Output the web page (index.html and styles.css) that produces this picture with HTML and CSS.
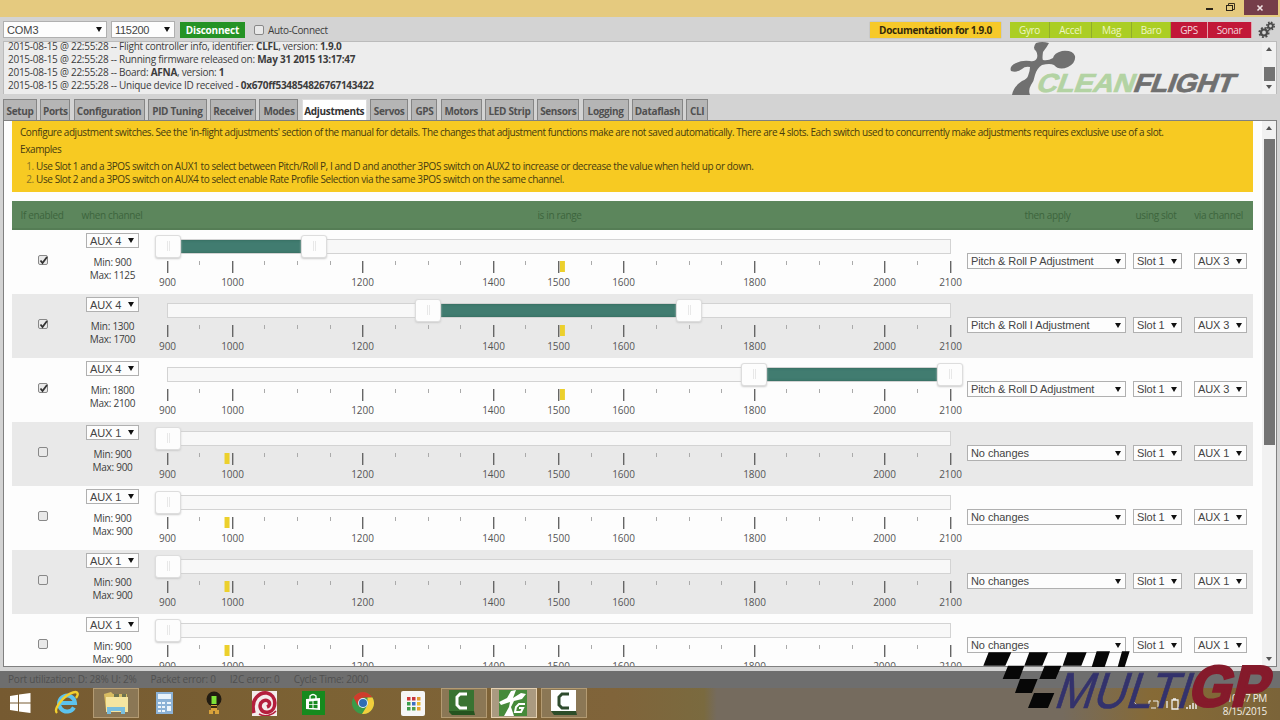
FILE: index.html
```html
<!DOCTYPE html>
<html lang="en">
<head>
    <meta charset="UTF-8">
    <title>Cleanflight Configurator</title>
    <link rel="stylesheet" href="styles.css">
</head>
<body>
    <div class="titlebar">
        <svg class="window-buttons" width="80" height="17" viewBox="0 0 80 17">
            <rect x="44" y="0" width="34" height="15" fill="#753d49"/>
            <rect x="6" y="8" width="7" height="2" fill="#2b2417"/>
            <path d="M28.500 5V3.500H34.500V9.500H33" fill="none" stroke="#3b321f"/>
            <rect x="26.500" y="5.500" width="6" height="5" fill="none" stroke="#2b2417"/>
            <path d="M57.500 5.500l5 5M62.500 5.500l-5 5" stroke="#f0e2e2" stroke-width="1.600"/>
        </svg>
    </div>

    <div class="port-bar">
        <span class="select port">COM3</span>
        <span class="select baud">115200</span>
        <a class="disconnect">Disconnect</a>
        <label class="auto-connect"><i class="check"></i>Auto-Connect</label>
        <a class="docs">Documentation for 1.9.0</a>
        <div class="sensors">
            <span class="on">Gyro</span>
            <span class="on">Accel</span>
            <span class="on">Mag</span>
            <span class="on">Baro</span>
            <span class="off">GPS</span>
            <span class="off">Sonar</span>
        </div>
        <svg class="gears" width="18" height="18" viewBox="0 0 18 18" fill="none" stroke="#4a4a4a">
            <circle cx="6" cy="11.500" r="3" stroke-width="2.200"/>
            <circle cx="6" cy="11.500" r="4.700" stroke-width="1.800" stroke-dasharray="1.900 1.790"/>
            <circle cx="12.500" cy="5" r="2.300" stroke-width="1.800"/>
            <circle cx="12.500" cy="5" r="3.700" stroke-width="1.600" stroke-dasharray="1.600 1.300"/>
        </svg>
    </div>

    <div class="log">
        <div class="log-lines">
            <p>2015-08-15 @ 22:55:28 -- Flight controller info, identifier: <strong>CLFL</strong>, version: <strong>1.9.0</strong></p>
            <p>2015-08-15 @ 22:55:28 -- Running firmware released on: <strong>May 31 2015 13:17:47</strong></p>
            <p>2015-08-15 @ 22:55:28 -- Board: <strong>AFNA</strong>, version: <strong>1</strong></p>
            <p>2015-08-15 @ 22:55:28 -- Unique device ID received - <strong>0x670ff534854826767143422</strong></p>
        </div>
        <svg class="logo" width="235" height="53" viewBox="0 0 235 53">
            <g fill="#707070">
                <path d="M26 1Q32 -1 39 1Q37 5 33 10Q32 17 33 18Q38 19 43 16Q44 11 52 9Q63 8 65 14Q66 21 58 25Q49 29 44 23Q40 21 32 23Q27 26 25 33Q24 39 21 43Q18 48 20 53H2Q3 45 12 39Q17 37 18 34Q20 29 20 25Q15 24 12 27Q7 31 1 29Q-1 24 6 21Q12 18 20 19Q25 20 27 16Q28 12 26 9Q22 6 26 1Z"/>
            </g>
            <g font-family="Liberation Sans" font-weight="bold" font-size="26" stroke-width="0.700" transform="translate(25 49.500) skewX(-20)">
                <text fill="#b3d3a3" stroke="#b3d3a3" textLength="97" lengthAdjust="spacingAndGlyphs">CLEAN</text>
                <text x="97" fill="#707070" stroke="#707070" textLength="100" lengthAdjust="spacingAndGlyphs">FLIGHT</text>
            </g>
        </svg>
        <div class="scroll small">
            <i class="up"></i>
            <b></b>
            <i class="down"></i>
        </div>
    </div>

    <div class="tabs">
        <a>Setup</a>
        <a>Ports</a>
        <a>Configuration</a>
        <a>PID Tuning</a>
        <a>Receiver</a>
        <a>Modes</a>
        <a class="active">Adjustments</a>
        <a>Servos</a>
        <a>GPS</a>
        <a>Motors</a>
        <a>LED Strip</a>
        <a>Sensors</a>
        <a>Logging</a>
        <a>Dataflash</a>
        <a>CLI</a>
    </div>

    <div class="content">
        <div class="pane">
            <div class="note">
                <p class="n1">Configure adjustment switches. See the 'in-flight adjustments' section of the manual for details. The changes that adjustment functions make are not saved automatically. There are 4 slots. Each switch used to concurrently make adjustments requires exclusive use of a slot.</p>
                <p class="n2">Examples</p>
                <ol>
                    <li>Use Slot 1 and a 3POS switch on AUX1 to select between Pitch/Roll P, I and D and another 3POS switch on AUX2 to increase or decrease the value when held up or down.</li>
                    <li>Use Slot 2 and a 3POS switch on AUX4 to select enable Rate Profile Selection via the same 3POS switch on the same channel.</li>
                </ol>
            </div>
            <div class="head">
                <span>If enabled</span>
                <span>when channel</span>
                <span>is in range</span>
                <span>then apply</span>
                <span>using slot</span>
                <span>via channel</span>
            </div>
            <div id="rows"></div>
        </div>
        <div class="scroll">
            <i class="up"></i>
            <b></b>
            <i class="down"></i>
        </div>
    </div>

    <div class="status">
        <span>Port utilization: D: 28% U: 2%</span>
        <span>Packet error: 0</span>
        <span>I2C error: 0</span>
        <span>Cycle Time: 2000</span>
    </div>

    <div class="taskbar">
        <div class="app">
            <svg width="24" height="24" viewBox="0 0 24 24" fill="#fff"><path d="M2 5l8-1.200v7.700H2zM11 3.600L22.500 2v9.500H11zM2 12.500h8v7.700L2 19zM11 12.500h11.500V22L11 20.400z"/></svg>
        </div>
        <div class="app">
            <svg width="26" height="26" viewBox="0 0 26 26" fill="none">
                <path d="M20 17.500A8 8 0 1 1 21 13H7" stroke="#5cc3ee" stroke-width="4"/>
                <path d="M3 23C-1 19 10 5 19 2.500C24 1 25 4 22 8" stroke="#f2cf2e" stroke-width="2.400"/>
            </svg>
        </div>
        <div class="app open">
            <svg width="28" height="26" viewBox="0 0 28 26">
                <path d="M2 4l7-2 2 2h14v16H4z" fill="#d9bd62"/>
                <path d="M4 7h22v15H4z" fill="#f5e5a0"/>
                <path d="M12 4h5v3h-5zM20 4h4v3h-4z" fill="#6e7350"/>
                <path d="M5 24v-7h18v7h-4v-3H9v3z" fill="#79bede"/>
            </svg>
        </div>
        <div class="app">
            <svg width="20" height="26" viewBox="0 0 20 26">
                <rect x="0" y="2" width="17" height="22" fill="#8cb2d6"/>
                <rect x="2" y="4" width="13" height="5" fill="#e8f3fb"/>
                <path d="M2 12h3v2H2zM6 12h3v2H6zM11 12h4v2h-4zM2 16h3v2H2zM6 16h3v2H6zM11 16h4v5h-4zM2 20h3v2H2zM6 20h3v2H6z" fill="#edf5fb"/>
            </svg>
        </div>
        <div class="app">
            <svg width="20" height="26" viewBox="0 0 20 26">
                <circle cx="8" cy="9" r="7.500" fill="#221c12"/>
                <rect x="5.500" y="6" width="5" height="8" fill="#7ee238"/>
                <path d="M5 15h6v5h2v4H9v-3H7v3H3v-4h2z" fill="#d9a23a"/>
                <path d="M5 16h6v2H5z" fill="#3a2a12"/>
            </svg>
        </div>
        <div class="app">
            <svg width="27" height="25" viewBox="0 0 27 25">
                <rect width="25" height="25" fill="#f4ecec"/>
                <path d="M2 22C-2 8 8 1 15 2C25 4 25 19 17 21C9 23 5 14 11 10C17 7 20 14 15 16" fill="none" stroke="#b41f3d" stroke-width="3.600"/>
                <path d="M7 23C12 26 20 25 24 20" fill="none" stroke="#b41f3d" stroke-width="1.500"/>
            </svg>
        </div>
        <div class="app">
            <svg width="27" height="24" viewBox="0 0 27 24">
                <rect width="23" height="24" fill="#168a1e"/>
                <path d="M4 8l14-1v12L4 18z" fill="#fff"/>
                <path d="M8 8V5q3-3 6 0v3" fill="none" stroke="#fff" stroke-width="1.400"/>
                <path d="M7 10.500l3.500-.3v3H7zM11.500 10l4-.3v3.500h-4zM7 14h3.500v3H7zM11.500 14h4v3.300l-4-.3z" fill="#168a1e"/>
            </svg>
        </div>
        <div class="app">
            <svg width="27" height="24" viewBox="0 0 27 24">
                <circle cx="12" cy="12" r="11" fill="#3a9b48"/>
                <path d="M2.500 6.500A11 11 0 0 1 21.500 6.500H12L7 15z" fill="#cf3c2c"/>
                <path d="M21.500 6.500A11 11 0 0 1 11 23L16.500 14V6.500z" fill="#f3ce3c"/>
                <circle cx="12" cy="12" r="5" fill="#e6eef5"/>
                <circle cx="12" cy="12" r="4" fill="#2f6db4"/>
            </svg>
        </div>
        <div class="app">
            <svg width="28" height="25" viewBox="0 0 28 25">
                <rect width="24" height="25" rx="2" fill="#f6f6f6"/>
                <path d="M6 6h3.500v3.500H6z" fill="#d03a3a"/><path d="M11 6h3.500v3.500H11z" fill="#c7343c"/><path d="M16 6h3.500v3.500H16z" fill="#e29b33"/>
                <path d="M6 11h3.500v3.500H6z" fill="#3a9e4c"/><path d="M11 11h3.500v3.500H11z" fill="#3b6fc4"/><path d="M16 11h3.500v3.500H16z" fill="#e7b92f"/>
                <path d="M6 16h3.500v3.500H6z" fill="#3f9c49"/><path d="M11 16h3.500v3.500H11z" fill="#4b9c4a"/><path d="M16 16h3.500v3.500H16z" fill="#e3a12f"/>
            </svg>
        </div>
        <div class="app open">
            <svg width="30" height="26" viewBox="0 0 30 26">
                <path d="M0 0h25v21l1 4H3L0 22z" fill="#25541f"/>
                <path d="M0 0h25v21H0z" fill="#397331"/>
                <path d="M18 4H11L8 7v8l3 3h7" fill="none" stroke="#fff" stroke-width="3"/>
            </svg>
        </div>
        <div class="app open current">
            <svg width="29" height="26" viewBox="0 0 29 26">
                <rect width="28" height="26" fill="#468a3a"/>
                <path d="M12 1l5-1-3 8 8-5 5 1-4 5-8 2-3 6 3 9H5l5-9 1-5-9 3-2-3 8-4z" fill="#fff"/>
                <path d="M26 14h-6l-3 3-1 5h6l2-4h-4" fill="none" stroke="#fff" stroke-width="2"/>
            </svg>
        </div>
        <div class="app open">
            <svg width="26" height="26" viewBox="0 0 26 26">
                <path d="M0 21h25l1 4H3z" fill="#2d4d29"/>
                <path d="M0 0h25v21H0z" fill="#fff"/>
                <path d="M18 4H11L8 7v8l3 3h7" fill="none" stroke="#2f4b2d" stroke-width="3"/>
            </svg>
        </div>
        <div class="tray">
            <svg width="84" height="12" viewBox="0 0 84 12" fill="none" stroke="#eee">
                <path d="M4 7l3-3 3 3"/>
                <path d="M22 3h2M26 3h5M22 3v5M31 3v6M24 10h5"/>
                <path d="M40 3v7M45 2h6v9h-6zM46 1h3" stroke-width="1.300"/>
                <path d="M60 11V9M63 11V7M66 11V5M69 11V3" stroke-width="1.500"/>
            </svg>
            <div class="clock"><span>10:57 PM</span><span>8/15/2015</span></div>
        </div>
    </div>

    <svg class="watermark" width="320" height="100" viewBox="0 0 960 300">
        <path d="M86 97H154L136 137H70zM208 97H264L247 137H193zM322 97H380L364 137H308zM410 94H450L434 141H395zM486 94H509L494 141H473zM144 137H193L178 177H128zM254 137H304L287 177H238zM180 177H233L216 219H165zM222 219H283L264 264H204z" fill="#070707"/>
        <g transform="translate(278 264) skewX(-18)">
            <text font-family="Liberation Sans" font-size="152" fill="#33326c" stroke="#33326c" stroke-width="2" textLength="404" lengthAdjust="spacingAndGlyphs">MULTI</text>
        </g>
        <g transform="translate(682 259) skewX(-14)">
            <text font-family="Liberation Sans" font-weight="bold" font-size="172" fill="#851a2b" stroke="#851a2b" stroke-width="9" textLength="236" lengthAdjust="spacingAndGlyphs">GP</text>
        </g>
    </svg>

    <script>
        const rows = [
            { on: true, aux: 4, min: 900, max: 1125, pos: 1506, action: "Pitch & Roll P Adjustment", via: 3 },
            { on: true, aux: 4, min: 1300, max: 1700, pos: 1506, action: "Pitch & Roll I Adjustment", via: 3 },
            { on: true, aux: 4, min: 1800, max: 2100, pos: 1506, action: "Pitch & Roll D Adjustment", via: 3 },
            { on: false, aux: 1, min: 900, max: 900, pos: 992, action: "No changes", via: 1 },
            { on: false, aux: 1, min: 900, max: 900, pos: 992, action: "No changes", via: 1 },
            { on: false, aux: 1, min: 900, max: 900, pos: 992, action: "No changes", via: 1 },
            { on: false, aux: 1, min: 900, max: 900, pos: 992, action: "No changes", via: 1 }
        ];
        const labels = [900, 1000, 1200, 1400, 1500, 1600, 1800, 2000, 2100];
        const WIDTH = 783;

        function px(value) {
            return (value - 900) / 1200 * WIDTH;
        }

        function percent(value) {
            return (value - 900) / 12 + "%";
        }

        // pips under the slider, a long one with a number at each label
        function ruler(pos) {
            let out = `<rect x="${px(pos) - 2.5}" y="0" width="5" height="11" fill="#ecd02c"/>`;
            for (let v = 900; v <= 2100; v += 50) {
                const big = labels.includes(v);
                const x = Math.floor(px(v));
                out += `<rect x="${x}" y="0" width="${big ? 1.4 : 1}" height="${big ? 12 : 4}" fill="${big ? "#666" : "#aaa"}"/>`;
                if (big) out += `<text x="${x + 0.5}" y="25">${v}</text>`;
            }
            return `<svg class="ruler" width="${WIDTH}" height="28">${out}</svg>`;
        }

        function slider(row) {
            const range = row.max > row.min
                ? `<div class="range" style="left:${percent(row.min)};width:${(row.max - row.min) / 12}%"></div>` +
                  `<i class="handle" style="left:${percent(row.max)}"></i>`
                : "";
            return `<div class="slider">${range}<i class="handle" style="left:${percent(row.min)}"></i></div>`;
        }

        document.getElementById("rows").innerHTML = rows.map(row => `
            <div class="row">
                <div class="cell-check"><i class="check">${row.on ? '<svg width="9" height="9" viewBox="0 0 9 9"><path d="M1.500 4.500l2 2.500L8 1" fill="none" stroke="#333" stroke-width="1.800"/></svg>' : ""}</i></div>
                <div class="cell-channel">
                    <span class="select">AUX ${row.aux}</span>
                    <p>Min: ${row.min}</p>
                    <p>Max: ${row.max}</p>
                </div>
                <div class="cell-range">${slider(row)}${ruler(row.pos)}</div>
                <span class="select action">${row.action.replace("&", "&amp;")}</span>
                <span class="select slot">Slot 1</span>
                <span class="select via">AUX ${row.via}</span>
            </div>`).join("");
    </script>
</body>
</html>
```
FILE: styles.css
```css
* {
    box-sizing: border-box;
}

body {
    margin: 0;
    width: 1280px;
    height: 720px;
    overflow: hidden;
    display: flex;
    flex-direction: column;
    background: #d3d3d3;
    font-family: "Open Sans", sans-serif;
    font-size: 10px;
    letter-spacing: -0.35px;
    color: #3c3c3c;
}

p, ol {
    margin: 0;
    padding: 0;
}

.titlebar {
    height: 17px;
    background: #e5ca7f;
    display: flex;
    justify-content: flex-end;
}

/* selects */
.select {
    display: flex;
    align-items: center;
    justify-content: space-between;
    height: 16px;
    padding: 0 4px 0 3px;
    border: 1px solid #b0b0b0;
    background: #fdfdfd;
    font-family: "Liberation Sans", sans-serif;
    font-size: 11px;
    letter-spacing: -0.08px;
    white-space: nowrap;
    color: #444;
}

.select::after {
    content: "";
    border: 3px solid transparent;
    border-top: 5px solid #111;
    border-bottom: 0;
}

.check {
    display: block;
    width: 10px;
    height: 10px;
    border: 1px solid #888;
    border-radius: 2px;
    background: #e9e9e9;
}

.check svg {
    display: block;
}

/* top bar */
.port-bar {
    height: 24px;
    padding: 4px 4px 0 3px;
    display: flex;
    align-items: flex-start;
}

.port-bar .port {
    width: 104px;
    height: 17px;
    margin-right: 4px;
}

.port-bar .baud {
    width: 64px;
    height: 17px;
    margin-right: 5px;
    letter-spacing: -0.3px;
}

.disconnect {
    width: 65px;
    height: 16px;
    margin: 1px 9px 0 0;
    line-height: 16px;
    text-align: center;
    font-weight: bold;
    letter-spacing: -0.2px;
    color: #fff;
    background: #259325;
}

.auto-connect {
    display: flex;
    align-items: center;
    gap: 4px;
    height: 18px;
    flex: 1;
}

.docs {
    width: 131px;
    height: 16px;
    margin: 1px 9px 0 0;
    line-height: 16px;
    text-align: center;
    font-weight: bold;
    color: #33290b;
    background: #f6c92a;
    box-shadow: 0 0 1px #999;
}

.sensors {
    display: grid;
    grid-template-columns: 40px 42px 40px 39px 37px 44px;
    height: 16px;
    margin: 1px 6px 0 0;
    line-height: 16px;
    text-align: center;
}

.sensors .on {
    background: #abce24;
    color: #eef6c4;
    border-right: 1px solid #90ad2b;
}

.sensors .off {
    background: #c21838;
    color: #f3d5dc;
    border-right: 1px solid #e5a0ac;
}

/* log */
.log {
    height: 53px;
    margin: 0 3px;
    border: 1px solid #bbb;
    border-width: 1px 1px 0;
    background: #ededed;
    display: flex;
}

.log-lines {
    flex: 1;
    padding-left: 4px;
    margin-top: -2px;
    letter-spacing: -0.26px;
}

.log-lines p {
    height: 13px;
    line-height: 13px;
    white-space: nowrap;
}

.logo {
    margin-right: 17px;
    overflow: visible;
}

/* scrollbars */
.scroll {
    width: 14px;
    background: #f1f1f1;
    display: flex;
    flex-direction: column;
    align-items: center;
    padding: 5px 0;
}

.scroll b {
    width: 11px;
    height: 306px;
    margin-top: 9px;
    background: #737373;
}

.scroll .up {
    border: 3px solid transparent;
    border-top: 0;
    border-bottom: 4px solid #555;
}

.scroll .down {
    margin-top: auto;
    border: 3px solid transparent;
    border-bottom: 0;
    border-top: 4px solid #555;
}

.scroll.small b {
    height: 14px;
    margin-top: 16px;
}

/* tabs */
.tabs {
    display: grid;
    grid-template-columns: 34px 30px 71px 59px 46px 39px 65px 38px 26px 41px 49px 42px 46px 51px 22px;
    column-gap: 3.300px;
    height: 26px;
    padding: 5px 0 0 3px;
}

.tabs a {
    height: 21px;
    line-height: 23px;
    border: 1px solid #858585;
    border-bottom: 0;
    background: #b5b5b5;
    text-align: center;
    font-weight: bold;
    white-space: nowrap;
    color: #505050;
}

.tabs .active {
    background: #fff;
    border-color: #ddd;
    color: #333;
}

/* content */
.content {
    height: 547px;
    margin: 0 3px;
    border: 1px solid #808080;
    background: #fdfdfd;
    display: flex;
    justify-content: space-between;
    overflow: hidden;
}

.pane {
    width: 1241px;
    margin-left: 8px;
}

.note {
    height: 71px;
    padding: 5px 8px 0;
    background: #f7ca22;
    color: #463b10;
    white-space: nowrap;
    line-height: 13px;
    letter-spacing: -0.405px;
}

.n1 {
    letter-spacing: -0.44px;
}

.n2 {
    margin: 4px 0;
}

.note ol {
    padding-left: 16px;
}

.note li::marker {
    color: #8a7526;
}

.head {
    display: grid;
    grid-template-columns: 60px 80px 815px 161px 56px 69px;
    height: 29px;
    margin-top: 9px;
    line-height: 29px;
    text-align: center;
    background: #5c865c;
    border-bottom: 2px solid #557d55;
    color: #3d653d;
}

.row {
    display: grid;
    grid-template-columns: 62px 77px 816px 159px 56px 65px;
    height: 64px;
}

.row:nth-child(even) {
    background: #e9e9e9;
}

.row > .select {
    margin-top: 23px;
}

.row > .slot {
    margin-left: 7px;
}

.row > .via {
    margin-left: 12px;
}

.cell-check {
    padding: 25px 0 0 26px;
}

.cell-channel {
    padding: 3px 12px 0;
    text-align: center;
}

.cell-channel .select {
    width: 53px;
    height: 15px;
    margin-bottom: 8px;
}

.cell-channel p {
    height: 13px;
    line-height: 13px;
    letter-spacing: -0.25px;
}

.cell-range {
    padding: 9px 0 0 16px;
}

.slider {
    position: relative;
    width: 784px;
    height: 15px;
    border: 1px solid #d3d3d3;
    background: #f8f8f8;
}

.range {
    position: absolute;
    top: 0;
    height: 13px;
    background: #417c70;
    box-shadow: inset 0 0 3px #2f6459;
}

.handle {
    position: absolute;
    top: -5px;
    width: 26px;
    height: 23px;
    margin-left: -13.500px;
    border: 1px solid #ddd;
    border-radius: 3px;
    background: linear-gradient(#e8e8e8, #e8e8e8) 11px 5px / 1px 10px no-repeat, linear-gradient(#e8e8e8, #e8e8e8) 13px 5px / 1px 10px no-repeat, #fdfdfd;
    box-shadow: 0 1px 2px #ccc;
}

.ruler {
    display: block;
    margin-top: 7px;
    overflow: visible;
}

.ruler text {
    text-anchor: middle;
    letter-spacing: -0.05px;
    fill: #555;
}

/* status bar */
.status {
    height: 17px;
    margin-top: 4px;
    padding-left: 8px;
    display: flex;
    gap: 14px;
    line-height: 17px;
    letter-spacing: -0.2px;
    background: #6e6e6e;
    color: #505050;
}

/* taskbar */
.taskbar {
    height: 32px;
    background: linear-gradient(90deg, #765a31, #7c6234 25%, #80643a 48%, #7a6a3f 55%, #756b5e 56%, #756b5e 83%, #866a36 90%, #7b6439);
    display: flex;
}

.app {
    width: 46px;
    height: 30px;
    margin-right: 3.700px;
    display: flex;
    align-items: center;
    justify-content: center;
    flex: none;
}

.app:first-child {
    width: 40px;
}

.open {
    border: 1px solid #b49b72;
    background: #8b7755;
}

.current {
    border-color: #e5cfae;
    background: #aa9a80;
}

.tray {
    margin-left: auto;
    padding-right: 13px;
    display: flex;
    align-items: center;
    gap: 12px;
    color: #f3efe6;
}

.clock {
    display: flex;
    flex-direction: column;
    align-items: flex-end;
    line-height: 13px;
    padding-top: 2px;
}

/* stream logo drawn over the lower right corner */
.watermark {
    position: absolute;
    left: 960px;
    top: 620px;
}
```
